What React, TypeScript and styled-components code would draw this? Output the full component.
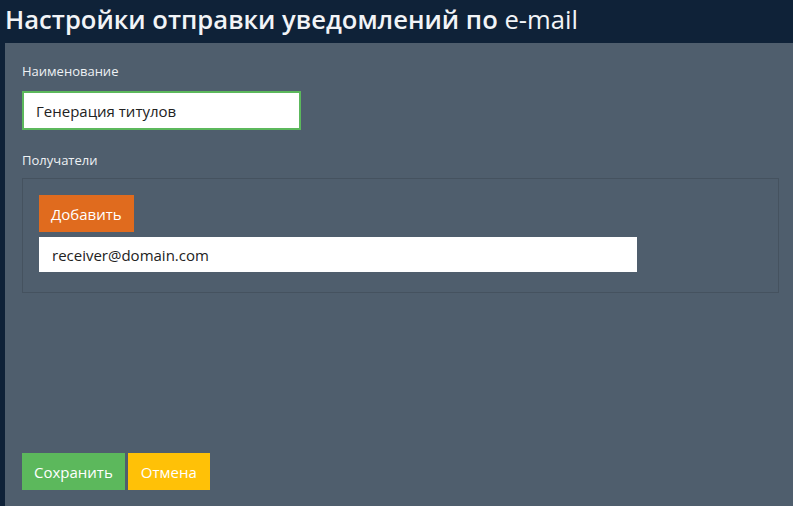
import React, { useState } from 'react';
import styled, { createGlobalStyle } from 'styled-components';

const GlobalStyle = createGlobalStyle`
  html, body {
    margin: 0;
    padding: 0;
    height: 100%;
    background: #0f2238;
  }
  #root {
    height: 100%;
  }
  * {
    box-sizing: border-box;
  }
`;

const Page = styled.div`
  display: flex;
  flex-direction: column;
  height: 506px;
  background: #0f2238;
  font-family: 'Open Sans', 'Noto Sans', sans-serif;
  color: #fff;
`;

const Header = styled.h1`
  margin: 0;
  height: 43px;
  padding: 1px 0 0 5px;
  font-size: 25.6px;
  line-height: 38px;
  font-weight: 600;
  color: #f2f4f7;
  white-space: nowrap;
  span {
    font-weight: 400;
  }
`;

const Panel = styled.div`
  flex: 1;
  margin-left: 5px;
  background: #4f5e6d;
  padding: 20px 14px 16px 17px;
  display: flex;
  flex-direction: column;
`;

const Label = styled.div<{ gap: number }>`
  font-size: 13px;
  line-height: 16px;
  color: #eef1f4;
  margin-bottom: ${(props) => props.gap}px;
`;

const NameInput = styled.input`
  width: 279px;
  height: 39px;
  border: 2px solid #5cb85c;
  background: #fff;
  padding: 0 12px;
  font-family: inherit;
  font-size: 15px;
  color: #222;
  outline: none;
  margin-bottom: 22px;
`;

const Recipients = styled.div`
  border: 1px solid #45525f;
  padding: 16px 16px 20px 16px;
  display: flex;
  flex-direction: column;
  align-items: flex-start;
  gap: 5px;
`;

const Btn = styled.button<{ color: string; pad: number }>`
  border: none;
  background: ${(props) => props.color};
  color: #fff;
  font-family: inherit;
  font-size: 15px;
  height: 37px;
  padding: 0 ${(props) => props.pad}px;
  cursor: pointer;
`;

const EmailInput = styled.input`
  width: 598px;
  height: 35px;
  border: none;
  background: #fff;
  padding: 0 13px;
  font-family: inherit;
  font-size: 15px;
  color: #222;
  outline: none;
`;

const Footer = styled.div`
  margin-top: auto;
  display: flex;
  gap: 3px;
`;

const App: React.FC = () => {
  const [name, setName] = useState('Генерация титулов');
  const [receivers, setReceivers] = useState<string[]>(['receiver@domain.com']);

  return (
    <Page>
      <GlobalStyle />
      <Header>
        Настройки отправки уведомлений по <span>e-mail</span>
      </Header>
      <Panel>
        <Label gap={12}>Наименование</Label>
        <NameInput value={name} onChange={(e) => setName(e.target.value)} />
        <Label gap={10}>Получатели</Label>
        <Recipients>
          <Btn color="#e06b1e" pad={12} onClick={() => setReceivers([...receivers, ''])}>
            Добавить
          </Btn>
          {receivers.map((r, idx) => (
            <EmailInput
              key={idx}
              value={r}
              onChange={(e) => {
                const list = [...receivers];
                list[idx] = e.target.value;
                setReceivers(list);
              }}
            />
          ))}
        </Recipients>
        <Footer>
          <Btn color="#5cb85c" pad={12}>Сохранить</Btn>
          <Btn color="#ffc107" pad={13}>Отмена</Btn>
        </Footer>
      </Panel>
    </Page>
  );
};

export default App;
